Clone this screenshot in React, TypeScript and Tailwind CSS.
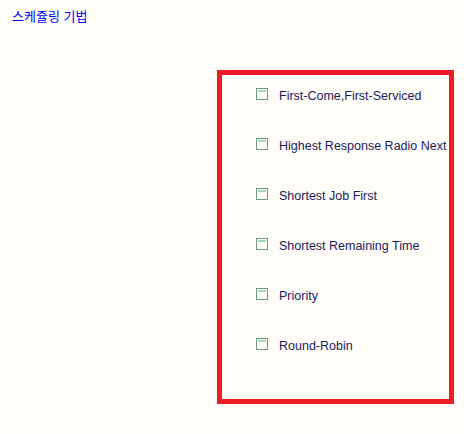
import React from "react";

const items = [
  "First-Come,First-Serviced",
  "Highest Response Radio Next",
  "Shortest Job First",
  "Shortest Remaining Time",
  "Priority",
  "Round-Robin",
];

function Box() {
  return (
    <span className="relative block w-[12px] h-[12px] shrink-0 border border-[#6f9a7e] bg-[#fdfdf8]">
      <span className="absolute left-[1px] right-[1px] top-[1px] h-[2px] bg-[#a9d4bc]" />
    </span>
  );
}

export default function App() {
  return (
    <div className="w-[464px] h-[434px] bg-[#fefdf7] pt-[7px]" style={{ fontFamily: "'Liberation Sans', Arial, sans-serif" }}>
      <div
        className="pl-[12px] h-[20px] leading-[20px] text-[13px] text-[#0000ff]"
        style={{ fontFamily: "'Liberation Sans', 'Noto Sans CJK KR', sans-serif" }}
      >
        스케쥴링 기법
      </div>
      <div className="ml-[217px] mt-[43px] w-[237px] h-[334px] border-[5px] border-[#ee1c24] pl-[34px] pt-[13px] flex flex-col gap-[38px]">
        {items.map((t) => (
          <label key={t} className="flex items-center h-[12px] gap-[11px]">
            <Box />
            <span className="text-[12.5px] leading-[15px] text-[#1c1a5c] whitespace-nowrap relative top-[2px]">{t}</span>
          </label>
        ))}
      </div>
    </div>
  );
}
